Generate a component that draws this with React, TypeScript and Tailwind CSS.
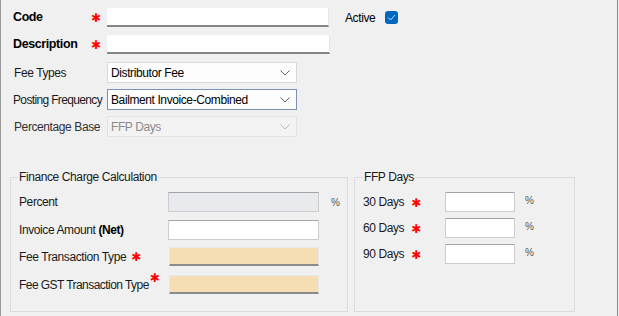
const Star = ({ className = "" }: { className?: string }) => (
  <span
    className={"text-[#ff0000] text-[12px] leading-none tracking-normal " + className}
    style={{ fontFamily: '"DejaVu Sans", sans-serif' }}
  >
    ✱
  </span>
);

const Chevron = ({ color = "#606060" }: { color?: string }) => (
  <svg width="10" height="6" viewBox="0 0 10 6" className="absolute right-[6px] top-[7px]">
    <path d="M0.5 0.5 L5 5 L9.5 0.5" fill="none" stroke={color} strokeWidth="1" />
  </svg>
);

const Select = ({
  value,
  disabled,
  focused,
}: {
  value: string;
  disabled?: boolean;
  focused?: boolean;
}) => (
  <div
    className={
      "relative w-[190px] h-[21px] border pl-[3px] flex items-center " +
      (disabled
        ? "bg-[#f3f3f3] border-[#e3e3e3] text-[#8a8a8a]"
        : focused
          ? "bg-[#fdfdfd] border-[#7b92b5] text-black"
          : "bg-[#fdfdfd] border-[#d9d9d9] text-black")
    }
  >
    {value}
    <Chevron color={disabled ? "#b5b5b5" : "#606060"} />
  </div>
);

const TextBox = ({ w }: { w: string }) => (
  <div className={"h-[19px] bg-white border-r border-[#e6e6e6] border-b-2 border-b-[#858585] " + w} />
);

const Field = ({ kind = "white" }: { kind?: "white" | "grey" | "wheat" }) => {
  if (kind === "wheat")
    return (
      <div className="w-[150px] h-[19px] bg-[#f5deb3] border border-[#e8e8e8] border-b-2 border-b-[#8c8c8c]" />
    );
  return (
    <div
      className={
        "h-[20px] border border-[#cdcdcd] border-t-[#9fa3aa] " +
        (kind === "grey" ? "bg-[#e9eaed] w-[151px]" : "bg-white w-[151px]")
      }
    />
  );
};

const DayBox = () => (
  <div className="w-[70px] h-[20px] bg-white border border-[#cdcdcd] border-t-[#9fa3aa]" />
);

export default function App() {
  return (
    <div
      className="w-[619px] h-[316px] bg-[#f0f0f0] text-[12px] tracking-[-0.4px] text-[#1a1a1a] border-l border-[#9a9a9a] overflow-hidden flex whitespace-nowrap"
      style={{ fontFamily: '"Liberation Sans", Arial, sans-serif' }}
    >
      <div className="w-[617px] border-r border-[#8a8a8a] flex flex-col">
        {/* top section */}
        <div className="flex flex-col pl-[12px] pt-[8px]">
          <div className="flex items-center h-[19px]">
            <span className="w-[78px] font-bold text-[12.5px] text-black">Code</span>
            <Star className="w-[16px]" />
            <TextBox w="w-[222px]" />
            <span className="ml-[16px] text-black">Active</span>
            <div className="ml-[10px] w-[13px] h-[13px] rounded-[3px] bg-[#0067c0] flex items-center justify-center">
              <svg width="9" height="7" viewBox="0 0 9 7">
                <path d="M1 3.5 L3.5 6 L8 1" fill="none" stroke="#cfe3f7" strokeWidth="1" />
              </svg>
            </div>
          </div>
          <div className="flex items-center h-[19px] mt-[8px]">
            <span className="w-[78px] font-bold text-[12.5px] text-black">Description</span>
            <Star className="w-[16px]" />
            <TextBox w="w-[223px]" />
          </div>
          <div className="flex items-center h-[21px] mt-[8px]">
            <span className="w-[94px] pl-[1px]">Fee Types</span>
            <Select value="Distributor Fee" />
          </div>
          <div className="flex items-center h-[21px] mt-[6px]">
            <span className="w-[94px] tracking-[-0.65px]">Posting Frequency</span>
            <Select value="Bailment Invoice-Combined" focused />
          </div>
          <div className="flex items-center h-[21px] mt-[6px]">
            <span className="w-[94px] pl-[1px] text-[#303030]">Percentage Base</span>
            <Select value="FFP Days" disabled />
          </div>
        </div>

        {/* group boxes */}
        <div className="flex pl-[9px] mt-[31px] gap-[6px]">
          <fieldset className="w-[338px] h-[144px] border border-[#dcdcdc] pl-[8px]">
            <legend className="ml-[-1px] px-[1px] text-[#1a1a1a]">Finance Charge Calculation</legend>
            <div className="flex flex-col mt-[6px]">
              <div className="flex items-center">
                <span className="w-[149px]">Percent</span>
                <Field kind="grey" />
                <span className="ml-[12px] text-[10px] text-[#555]">%</span>
              </div>
              <div className="flex items-center mt-[8px]">
                <span className="w-[149px]">
                  Invoice Amount <b className="text-black">(Net)</b>
                </span>
                <Field />
              </div>
              <div className="flex items-center mt-[7px]">
                <span className="w-[150px] flex items-center">
                  Fee Transaction Type <Star className="ml-[5px] mt-[1px]" />
                </span>
                <Field kind="wheat" />
              </div>
              <div className="flex items-center mt-[9px]">
                <span className="w-[150px] flex items-start tracking-[-0.55px]">
                  Fee GST Transaction Type<Star className="ml-[1px] mt-[-4px]" />
                </span>
                <Field kind="wheat" />
              </div>
            </div>
          </fieldset>

          <fieldset className="w-[221px] h-[144px] border border-[#dcdcdc] pl-[8px]">
            <legend className="px-[1px] text-[#1a1a1a]">FFP Days</legend>
            <div className="flex flex-col gap-[6px] mt-[6px]">
              {["30 Days", "60 Days", "90 Days"].map((d) => (
                <div key={d} className="flex items-center">
                  <span className="w-[82px] flex items-center">
                    {d}
                    <Star className="ml-[7px] mt-[1px]" />
                  </span>
                  <DayBox />
                  <span className="ml-[10px] text-[10px] text-[#555] mt-[-4px]">%</span>
                </div>
              ))}
            </div>
          </fieldset>
        </div>
      </div>
    </div>
  );
}
